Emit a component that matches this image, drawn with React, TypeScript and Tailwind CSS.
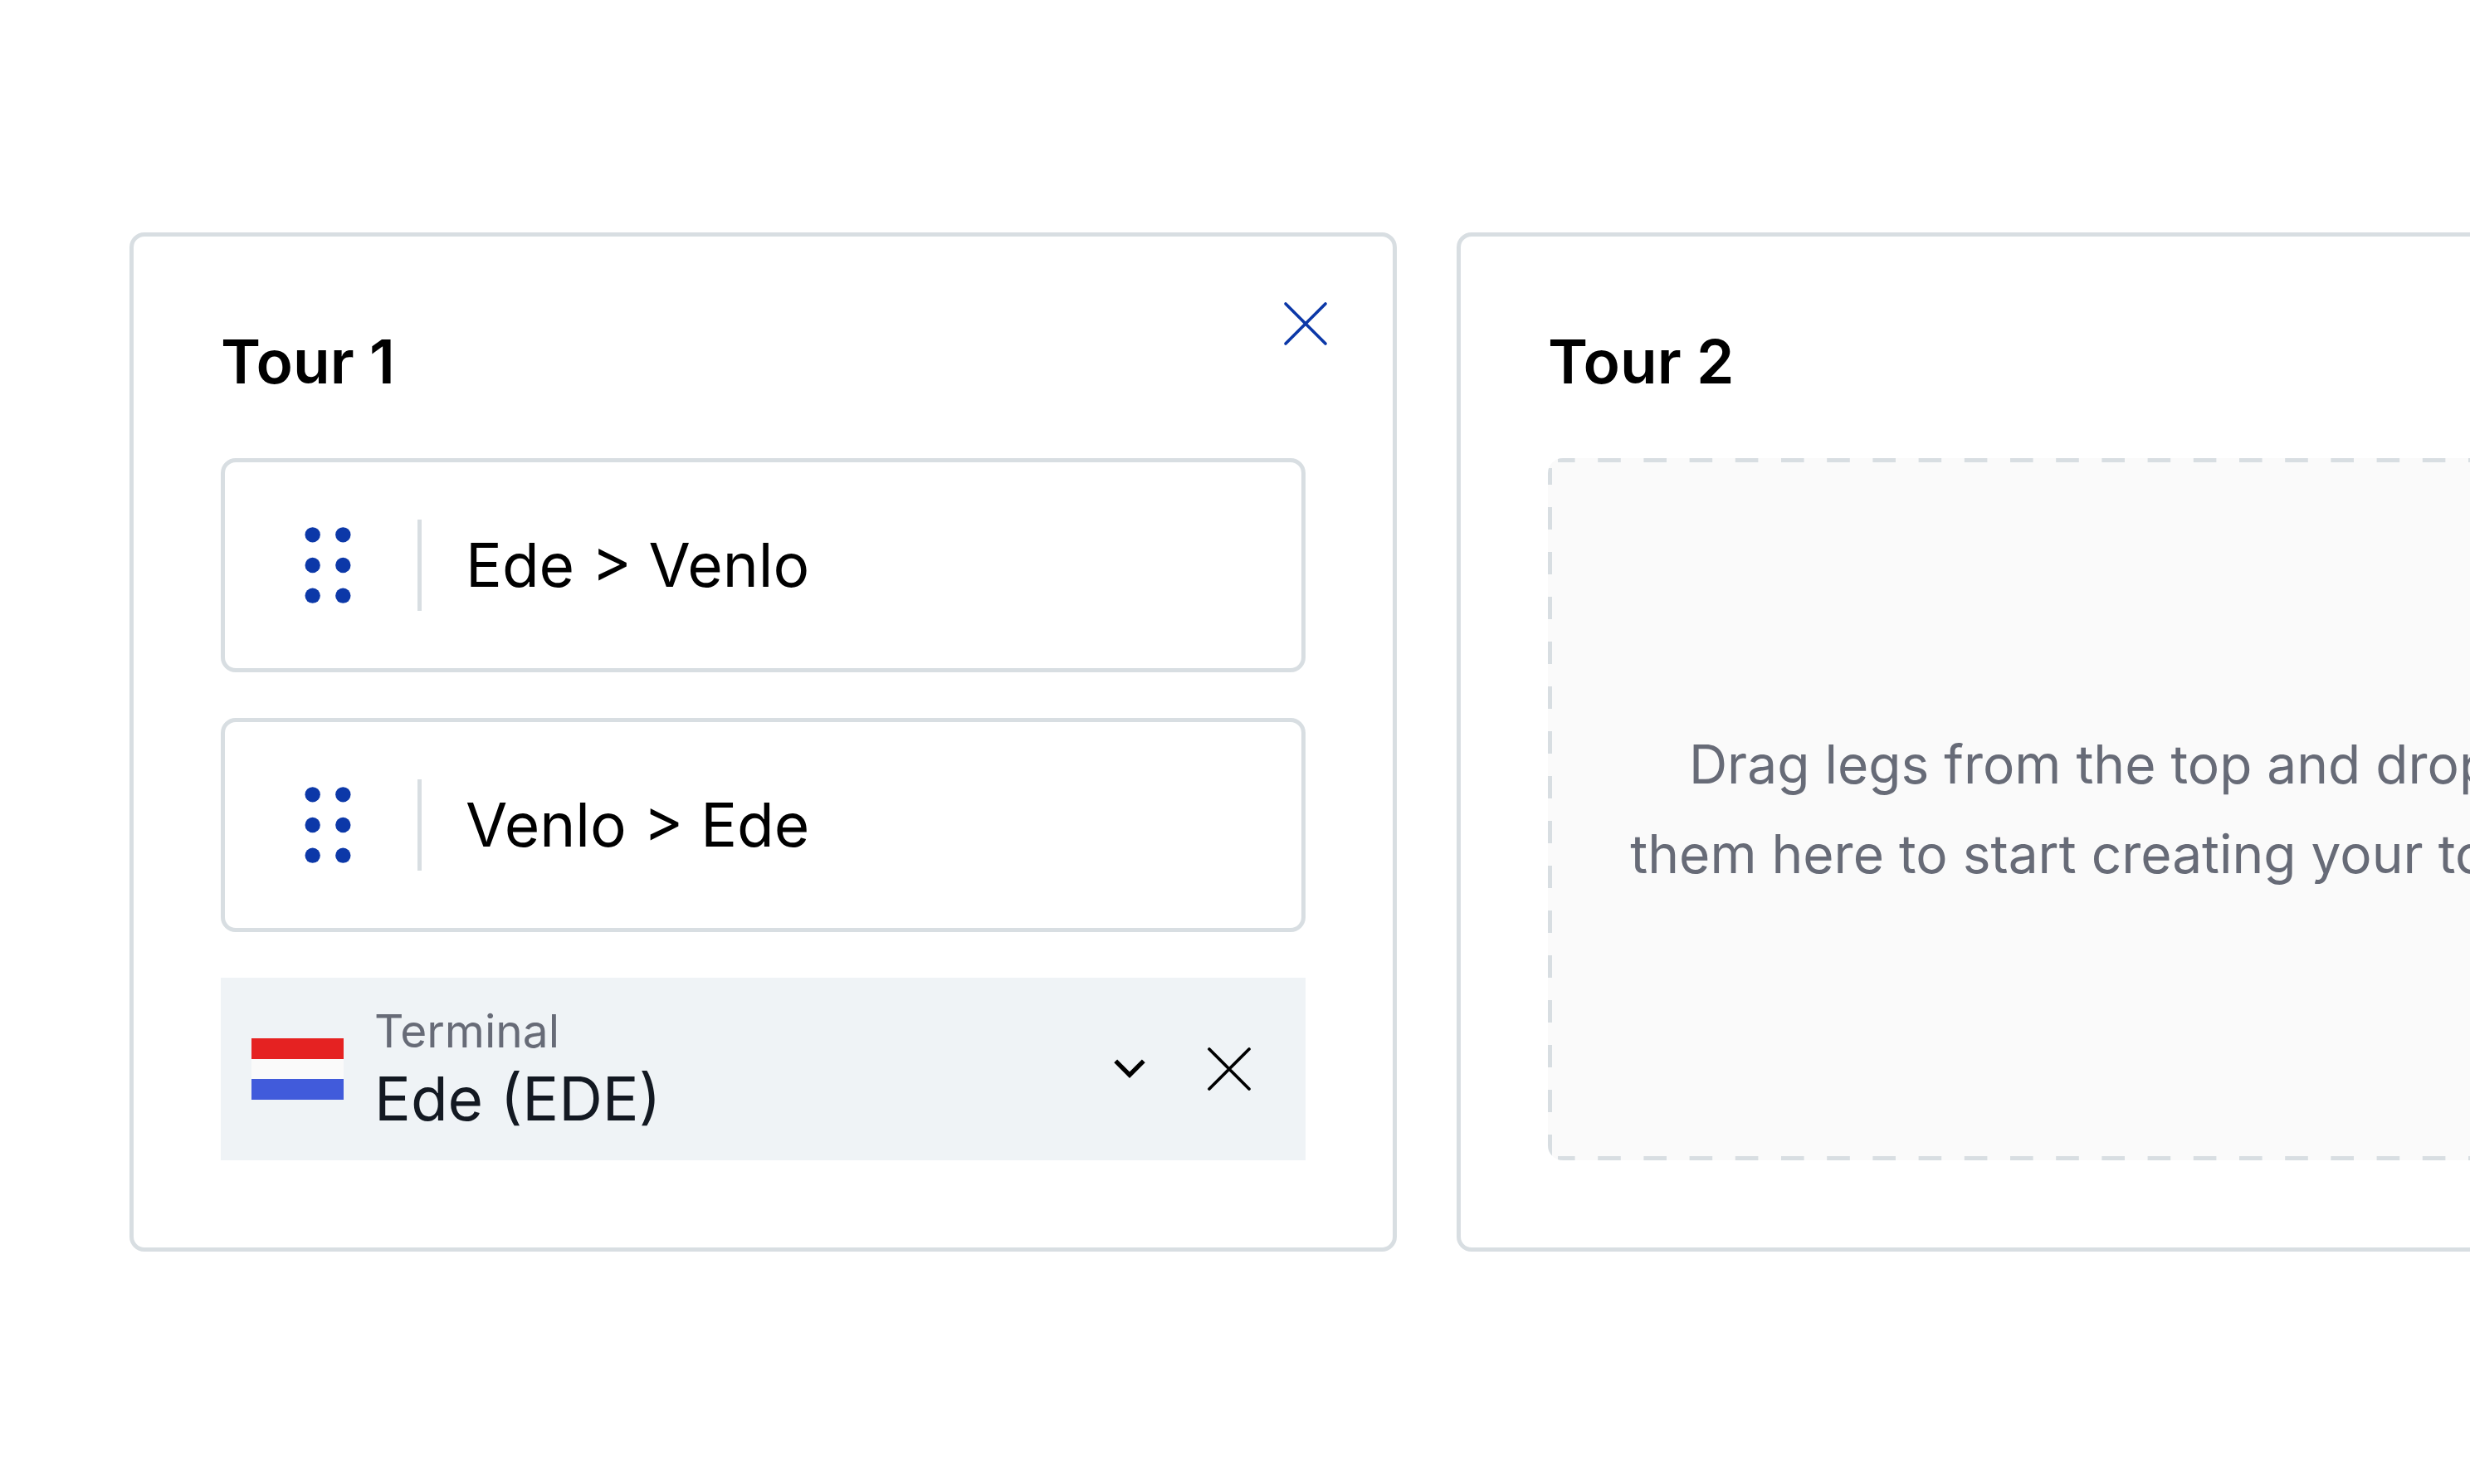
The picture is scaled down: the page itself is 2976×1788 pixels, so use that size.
import { useState } from 'react'

interface Leg {
  id: string
  from: string
  to: string
}

interface Tour {
  id: string
  name: string
  legs: Leg[]
}

const TOURS: Tour[] = [
  {
    id: 'tour-1',
    name: 'Tour 1',
    legs: [
      { id: 'leg-1', from: 'Ede', to: 'Venlo' },
      { id: 'leg-2', from: 'Venlo', to: 'Ede' },
    ],
  },
  { id: 'tour-2', name: 'Tour 2', legs: [] },
]

function CrossIcon() {
  return (
    <svg viewBox="0 0 110 110" className="size-[110px]" fill="none" stroke="currentColor" strokeWidth="3.7" strokeLinecap="round" aria-hidden="true">
      <path d="M31 31 79 79M79 31 31 79" />
    </svg>
  )
}

function GripIcon() {
  return (
    <svg viewBox="0 0 24 24" className="size-[110px]" fill="currentColor" aria-hidden="true">
      <circle cx="8" cy="4" r="2" />
      <circle cx="16" cy="4" r="2" />
      <circle cx="8" cy="12" r="2" />
      <circle cx="16" cy="12" r="2" />
      <circle cx="8" cy="20" r="2" />
      <circle cx="16" cy="20" r="2" />
    </svg>
  )
}

function ChevronIcon() {
  return (
    <svg viewBox="0 0 110 110" className="size-[110px] shrink-0 pointer-events-none" fill="none" stroke="currentColor" strokeWidth="5.4" aria-hidden="true">
      <path d="M38.2 45.4 55 62.2 71.8 45.4" />
    </svg>
  )
}

function DutchFlag() {
  return (
    <svg viewBox="0 0 9 6" className="w-[111px] h-[74px] shrink-0" shapeRendering="crispEdges" aria-hidden="true">
      <rect width="9" height="2" fill="#e52222" />
      <rect y="2" width="9" height="2" fill="#fafafa" />
      <rect y="4" width="9" height="2" fill="#415bdb" />
    </svg>
  )
}

function LegCard({ leg }: { leg: Leg }) {
  return (
    <li className="flex items-center h-[258px] pl-[69px] border-5 border-[#d8dee2] rounded-[18px]">
      <button type="button" aria-label="Move leg" className="text-[#0c38a8] cursor-grab">
        <GripIcon />
      </button>
      <span className="w-[5px] h-[110px] mx-[53px] bg-[#d8dee2]"></span>
      <span>{leg.from} &gt; {leg.to}</span>
    </li>
  )
}

function TerminalField() {
  const [terminal, setTerminal] = useState('EDE')

  return (
    <div className="flex items-center h-[220px] px-[37px] bg-[#eff3f6]">
      <DutchFlag />
      <div className="flex flex-col flex-1 min-w-0 ml-[37px]">
        <label htmlFor="terminal" className="text-[55px] leading-[72px] text-[#676b77]">Terminal</label>
        <select
          id="terminal"
          value={terminal}
          onChange={e => setTerminal(e.target.value)}
          className="appearance-none bg-transparent leading-[92px] text-[#131922]"
        >
          <option value="EDE">Ede (EDE)</option>
        </select>
      </div>
      <ChevronIcon />
      <button type="button" aria-label="Clear terminal" className="ml-[10px]">
        <CrossIcon />
      </button>
    </div>
  )
}

function DropZone() {
  return (
    <div className="relative flex flex-1 items-center justify-center bg-[#fafafa] rounded-[18px] overflow-hidden">
      {/* Dashed outline, longer dashes than a CSS border gives */}
      <svg className="absolute inset-0 w-full h-full" stroke="#d8dee2" strokeWidth="10" aria-hidden="true">
        <line x1="12" y1="0" x2="100%" y2="0" strokeDasharray="27.6" strokeDashoffset="7" />
        <line x1="12" y1="100%" x2="100%" y2="100%" strokeDasharray="27.6" strokeDashoffset="7" />
        <line x1="0" y1="12" x2="0" y2="100%" strokeDasharray="27" strokeDashoffset="7" />
        <line x1="100%" y1="12" x2="100%" y2="100%" strokeDasharray="27" strokeDashoffset="7" />
      </svg>
      <p className="text-[64px] leading-[108px] text-center text-[#676b77]">
        Drag legs from the top and drop
        <br />
        them here to start creating your tour.
      </p>
    </div>
  )
}

function TourCard({ tour }: { tour: Tour }) {
  const hasLegs = tour.legs.length > 0

  return (
    <section className="flex flex-col p-[105px] border-5 border-[#d8dee2] rounded-[18px]">
      <div className="flex items-start justify-between h-[92px] mb-[70px]">
        <h2 className="font-semibold">{tour.name}</h2>
        {hasLegs && (
          <button type="button" aria-label={`Remove ${tour.name}`} className="-mt-[55px] -mr-[55px] text-[#0c38a8]">
            <CrossIcon />
          </button>
        )}
      </div>

      {hasLegs ? (
        <>
          <ul className="flex flex-col gap-[55px] mb-[55px]">
            {tour.legs.map(leg => (
              <LegCard key={leg.id} leg={leg} />
            ))}
          </ul>
          <TerminalField />
        </>
      ) : (
        <DropZone />
      )}
    </section>
  )
}

export default function App() {
  return (
    <main className="flex items-center min-h-screen pl-[156px] overflow-hidden bg-white text-black text-[73px] leading-[92px] font-['Inter',sans-serif]">
      <div className="grid grid-flow-col auto-cols-[calc(50%+117px)] gap-[72px] w-full">
        {TOURS.map(tour => (
          <TourCard key={tour.id} tour={tour} />
        ))}
      </div>
    </main>
  )
}
